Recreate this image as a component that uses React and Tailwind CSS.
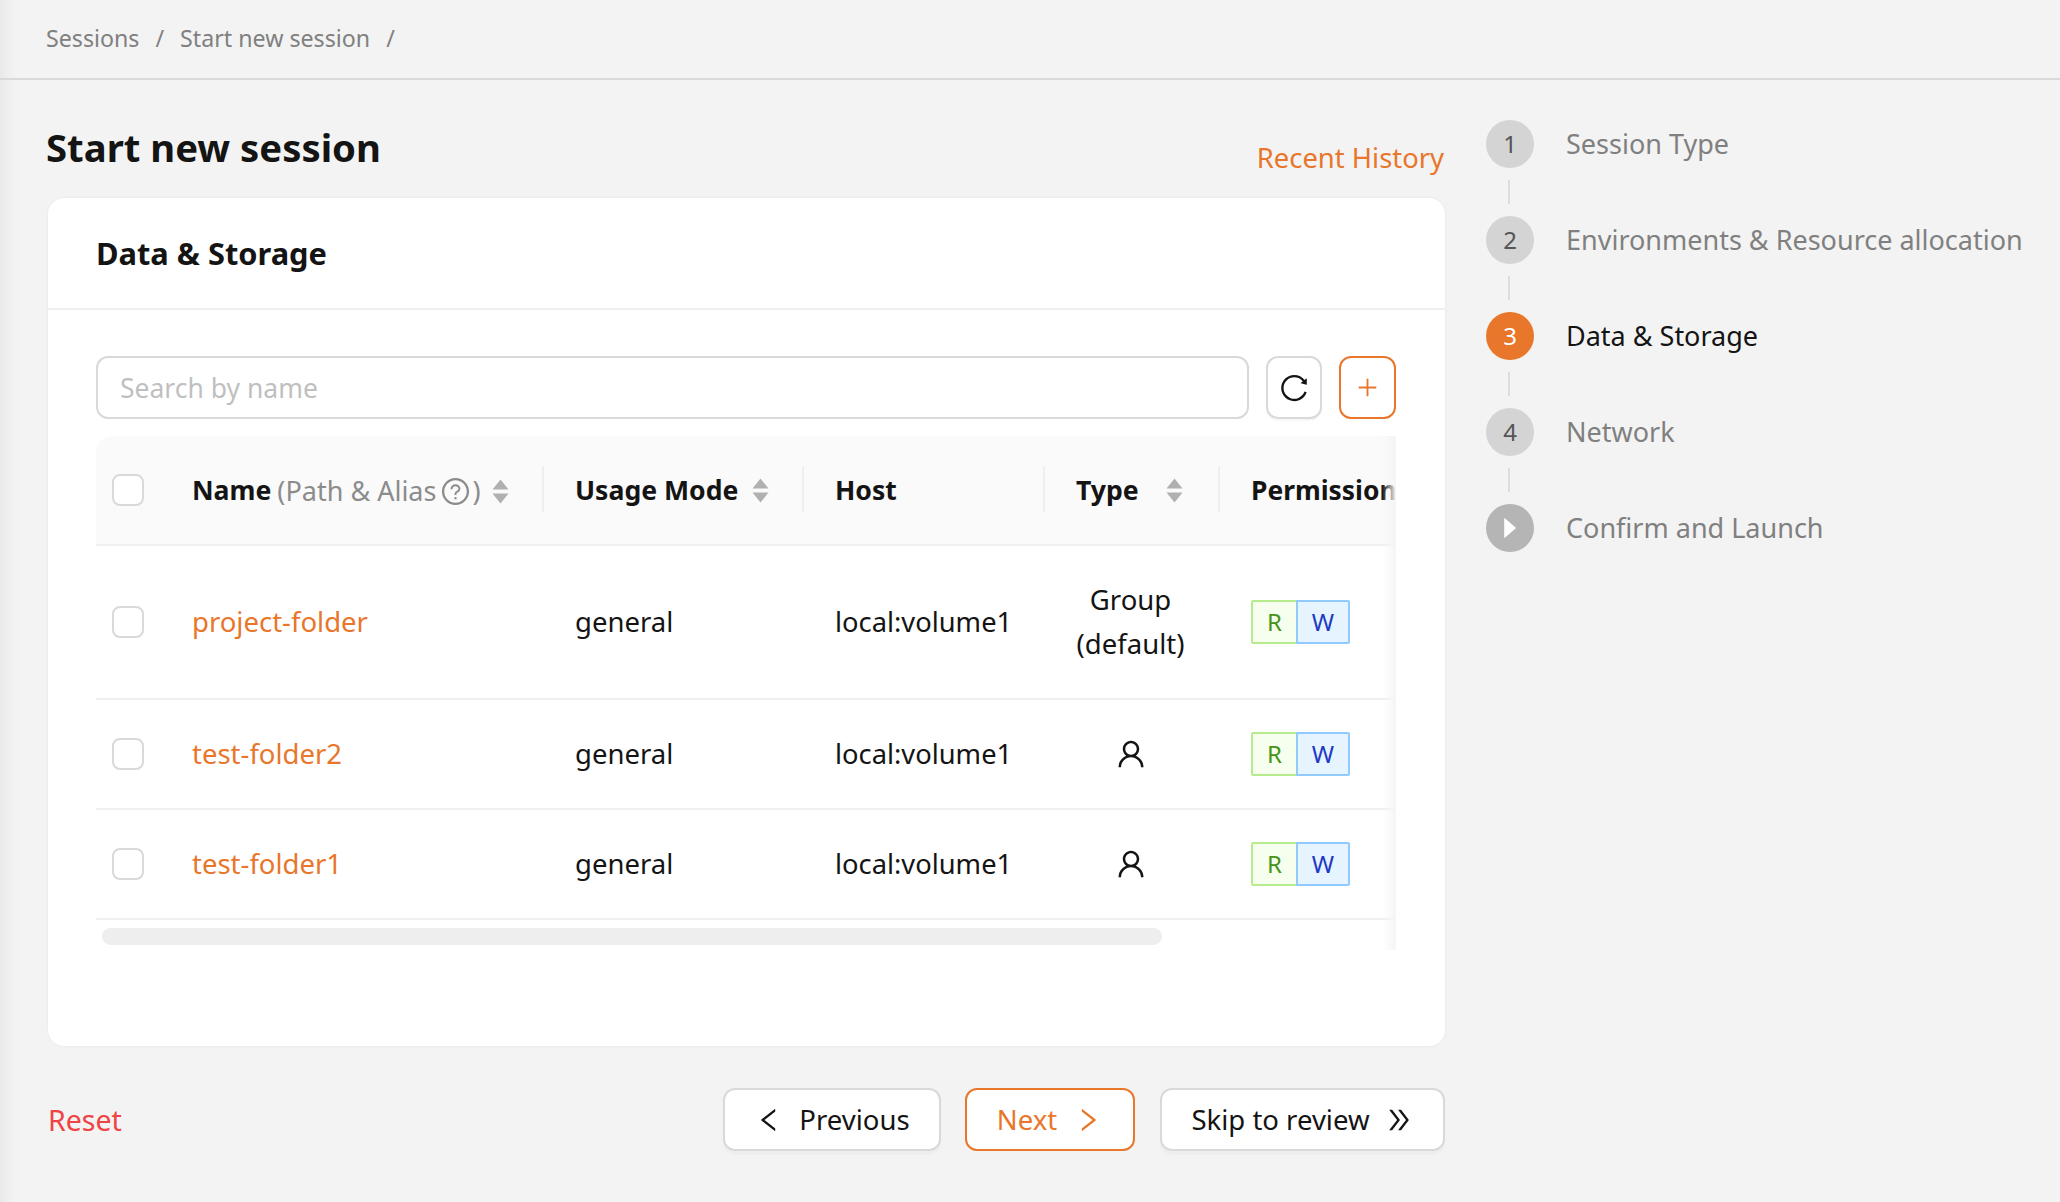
import { AiOutlineReload, AiOutlinePlus, AiOutlineUser, AiOutlineLeft, AiOutlineRight, AiOutlineDoubleRight, AiOutlineQuestionCircle, AiFillCaretRight } from "react-icons/ai";

const rows = [
  { name: "project-folder", type: "group", height: "h-[154px]" },
  { name: "test-folder2", type: "user", height: "h-[110px]" },
  { name: "test-folder1", type: "user", height: "h-[110px]" },
];

const steps = [
  { label: "Session Type", mark: "1" },
  { label: "Environments & Resource allocation", mark: "2" },
  { label: "Data & Storage", mark: "3", active: true },
  { label: "Network", mark: "4" },
  { label: "Confirm and Launch", play: true },
];

const SortIcon = () => (
  <svg width="17" height="25" viewBox="0 0 17 25" fill="#b0b0b0" className="shrink-0">
    <path d="M8.5 0.5 L16.5 10.5 H0.5Z" />
    <path d="M8.5 24.5 L0.5 14.5 H16.5Z" />
  </svg>
);

const Checkbox = () => (
  <span className="block w-8 h-8 rounded-[8px] border-2 border-[#d9d9d9] bg-white" />
);

const Divider = () => (
  <span className="absolute left-0 top-[30px] h-[46px] w-[2px] bg-[#efefef]" />
);

const App = () => {
  return (
    <div className="relative w-[2060px] h-[1202px] overflow-hidden bg-[#f3f3f3] font-['Noto_Sans',sans-serif] text-[27px] text-[#141414]">
      <div className="absolute left-0 top-0 h-full w-[14px] bg-linear-to-r from-[#e9e9e9] to-transparent" />

      <header className="relative flex items-center h-[80px] pb-[2px] border-b-2 border-[#d9d9d9] pl-[46px] text-[#808080] text-[23.2px]">
        <span>Sessions</span>
        <span className="mx-[16px]">/</span>
        <span>Start new session</span>
        <span className="mx-[16px]">/</span>
      </header>

      <div className="relative flex">
        <main className="w-[1397px] ml-[48px]">
          <div className="flex items-end justify-between h-[118px] pb-5">
            <h1 className="text-[38.3px] font-bold leading-[56px] self-start mt-[39px] -ml-[2px]">Start new session</h1>
            <a className="mr-[1px] text-[27.4px] text-[#e8762b] leading-10">Recent History</a>
          </div>

          <section className="h-[848px] rounded-2xl bg-white shadow-[0_0_3px_rgba(0,0,0,0.06)]">
            <div className="flex items-center h-[112px] pt-[1px] border-b-2 border-[#f0f0f0] px-12 text-[30.8px] font-bold">
              Data &amp; Storage
            </div>

            <div className="pl-12 pr-[49px] pt-[46px]">
              <div className="flex gap-[17px]">
                <div className="flex-1 flex items-center h-[63px] pt-[2px] rounded-xl border-2 border-[#d9d9d9] px-[22px] text-[26.5px] text-[#bfbfbf]">
                  Search by name
                </div>
                <button className="flex items-center justify-center w-[56px] h-[63px] rounded-xl border-2 border-[#d9d9d9] bg-white text-[32px] shadow-[0_2px_0_rgba(0,0,0,0.03)]">
                  <AiOutlineReload />
                </button>
                <button className="flex items-center justify-center w-[57px] h-[63px] rounded-xl border-2 border-[#e8762b] bg-white text-[#e8762b] text-[25px]">
                  <AiOutlinePlus />
                </button>
              </div>

              <div className="relative mt-[17px] h-[514px] w-[1300px] overflow-hidden">
                <div className="absolute right-0 top-0 z-10 h-full w-[14px] bg-linear-to-l from-[#f5f5f5] to-transparent" />
                <table className="table-fixed w-[1440px] border-collapse text-[27.5px]">
                  <colgroup>
                    <col className="w-[64px]" />
                    <col className="w-[382px]" />
                    <col className="w-[260px]" />
                    <col className="w-[241px]" />
                    <col className="w-[175px]" />
                    <col className="w-[318px]" />
                  </colgroup>
                  <thead>
                    <tr className="h-[109px] bg-[#fafafa] border-b-2 border-[#f0f0f0] text-left font-bold text-[26.6px]">
                      <th className="pl-4 rounded-tl-2xl"><Checkbox /></th>
                      <th className="relative pl-8 pt-[2px] font-normal">
                        <span className="flex items-center">
                          <span className="font-bold">Name</span>
                          <span className="ml-[6px] text-[27px] text-[#8c8c8c] flex items-center">
                            (Path &amp; Alias
                            <AiOutlineQuestionCircle className="ml-1 mr-[1px] text-[31px]" />)
                          </span>
                          <span className="ml-[11px] flex"><SortIcon /></span>
                        </span>
                      </th>
                      <th className="relative pl-[33px] pt-[2px]">
                        <Divider />
                        <span className="flex items-center gap-[14px]">Usage Mode <SortIcon /></span>
                      </th>
                      <th className="relative pl-[33px] pt-[2px]"><Divider />Host</th>
                      <th className="relative pl-[33px] pt-[2px]">
                        <Divider />
                        <span className="flex items-center gap-[27px]">Type <SortIcon /></span>
                      </th>
                      <th className="relative pl-[33px] pt-[2px] text-[26.4px]"><Divider />Permission</th>
                    </tr>
                  </thead>
                  <tbody>
                    {rows.map((row) => (
                      <tr key={row.name} className={`${row.height} border-b-2 border-[#f0f0f0]`}>
                        <td className="pl-4"><Checkbox /></td>
                        <td className="pl-8 text-[#e8762b]">{row.name}</td>
                        <td className="pl-[33px]">general</td>
                        <td className="pl-[33px] text-[27.3px]">local:volume1</td>
                        <td className="px-8 text-center leading-[44px]">
                          {row.type === "group" ? (
                            <span>Group<br />(default)</span>
                          ) : (
                            <AiOutlineUser className="block mx-auto text-[34px]" />
                          )}
                        </td>
                        <td className="pl-[33px]">
                          <span className="flex">
                            <span className="flex items-center justify-center w-[47px] h-[44px] pb-[1px] border-2 border-[#b7eb8f] bg-[#f6ffed] text-[#46931a] text-[24px] rounded-l-[2px]">R</span>
                            <span className="flex items-center justify-center w-[54px] h-[44px] pb-[1px] -ml-[2px] border-2 border-[#91caff] bg-[#e6f4ff] text-[#1d39c4] text-[24px] rounded-r-[2px]">W</span>
                          </span>
                        </td>
                      </tr>
                    ))}
                  </tbody>
                </table>
                <div className="mt-2 ml-[6px] h-[17px] w-[1060px] rounded-full bg-[#eeeeee]" />
              </div>
            </div>
          </section>

          <footer className="flex items-center justify-between mt-[42px] text-[27.5px]">
            <a className="pt-[1px] text-[28.5px] text-[#ef4444]">Reset</a>
            <div className="flex">
              <button className="flex items-center justify-center gap-[15px] w-[218px] h-[63px] pt-[1px] rounded-xl border-2 border-[#d9d9d9] bg-white shadow-[0_4px_0_rgba(0,0,0,0.02)]">
                <AiOutlineLeft className="text-[30px]" />Previous
              </button>
              <button className="flex items-center justify-center gap-[16px] ml-6 w-[170px] h-[63px] pt-[1px] rounded-xl border-2 border-[#e8762b] bg-white text-[#e8762b]">
                Next<AiOutlineRight className="text-[30px]" />
              </button>
              <button className="flex items-center justify-center gap-[14px] ml-[25px] w-[285px] h-[63px] pt-[1px] rounded-xl border-2 border-[#d9d9d9] bg-white shadow-[0_4px_0_rgba(0,0,0,0.02)]">
                Skip to review<AiOutlineDoubleRight className="text-[30px]" />
              </button>
            </div>
          </footer>
        </main>

        <aside className="ml-[41px] pt-10">
          {steps.map((step, i) => (
            <div key={step.label}>
              <div className="flex items-center h-12">
                {step.play ? (
                  <span className="flex items-center justify-center w-12 h-12 rounded-full bg-[#b5b5b5] text-white text-[28px]">
                    <AiFillCaretRight />
                  </span>
                ) : step.active ? (
                  <span className="flex items-center justify-center w-12 h-12 rounded-full bg-[#e8762b] text-white text-[24px]">{step.mark}</span>
                ) : (
                  <span className="flex items-center justify-center w-12 h-12 rounded-full bg-[#d4d4d4] text-[#555555] text-[24px]">{step.mark}</span>
                )}
                <span className={`ml-8 whitespace-nowrap ${step.active ? "text-[#141414]" : "text-[#808080]"}`}>{step.label}</span>
              </div>
              {i < steps.length - 1 && (
                <div className="ml-[22px] my-3 w-[2px] h-6 bg-[#dddddd]" />
              )}
            </div>
          ))}
        </aside>
      </div>
    </div>
  );
};

export default App;
